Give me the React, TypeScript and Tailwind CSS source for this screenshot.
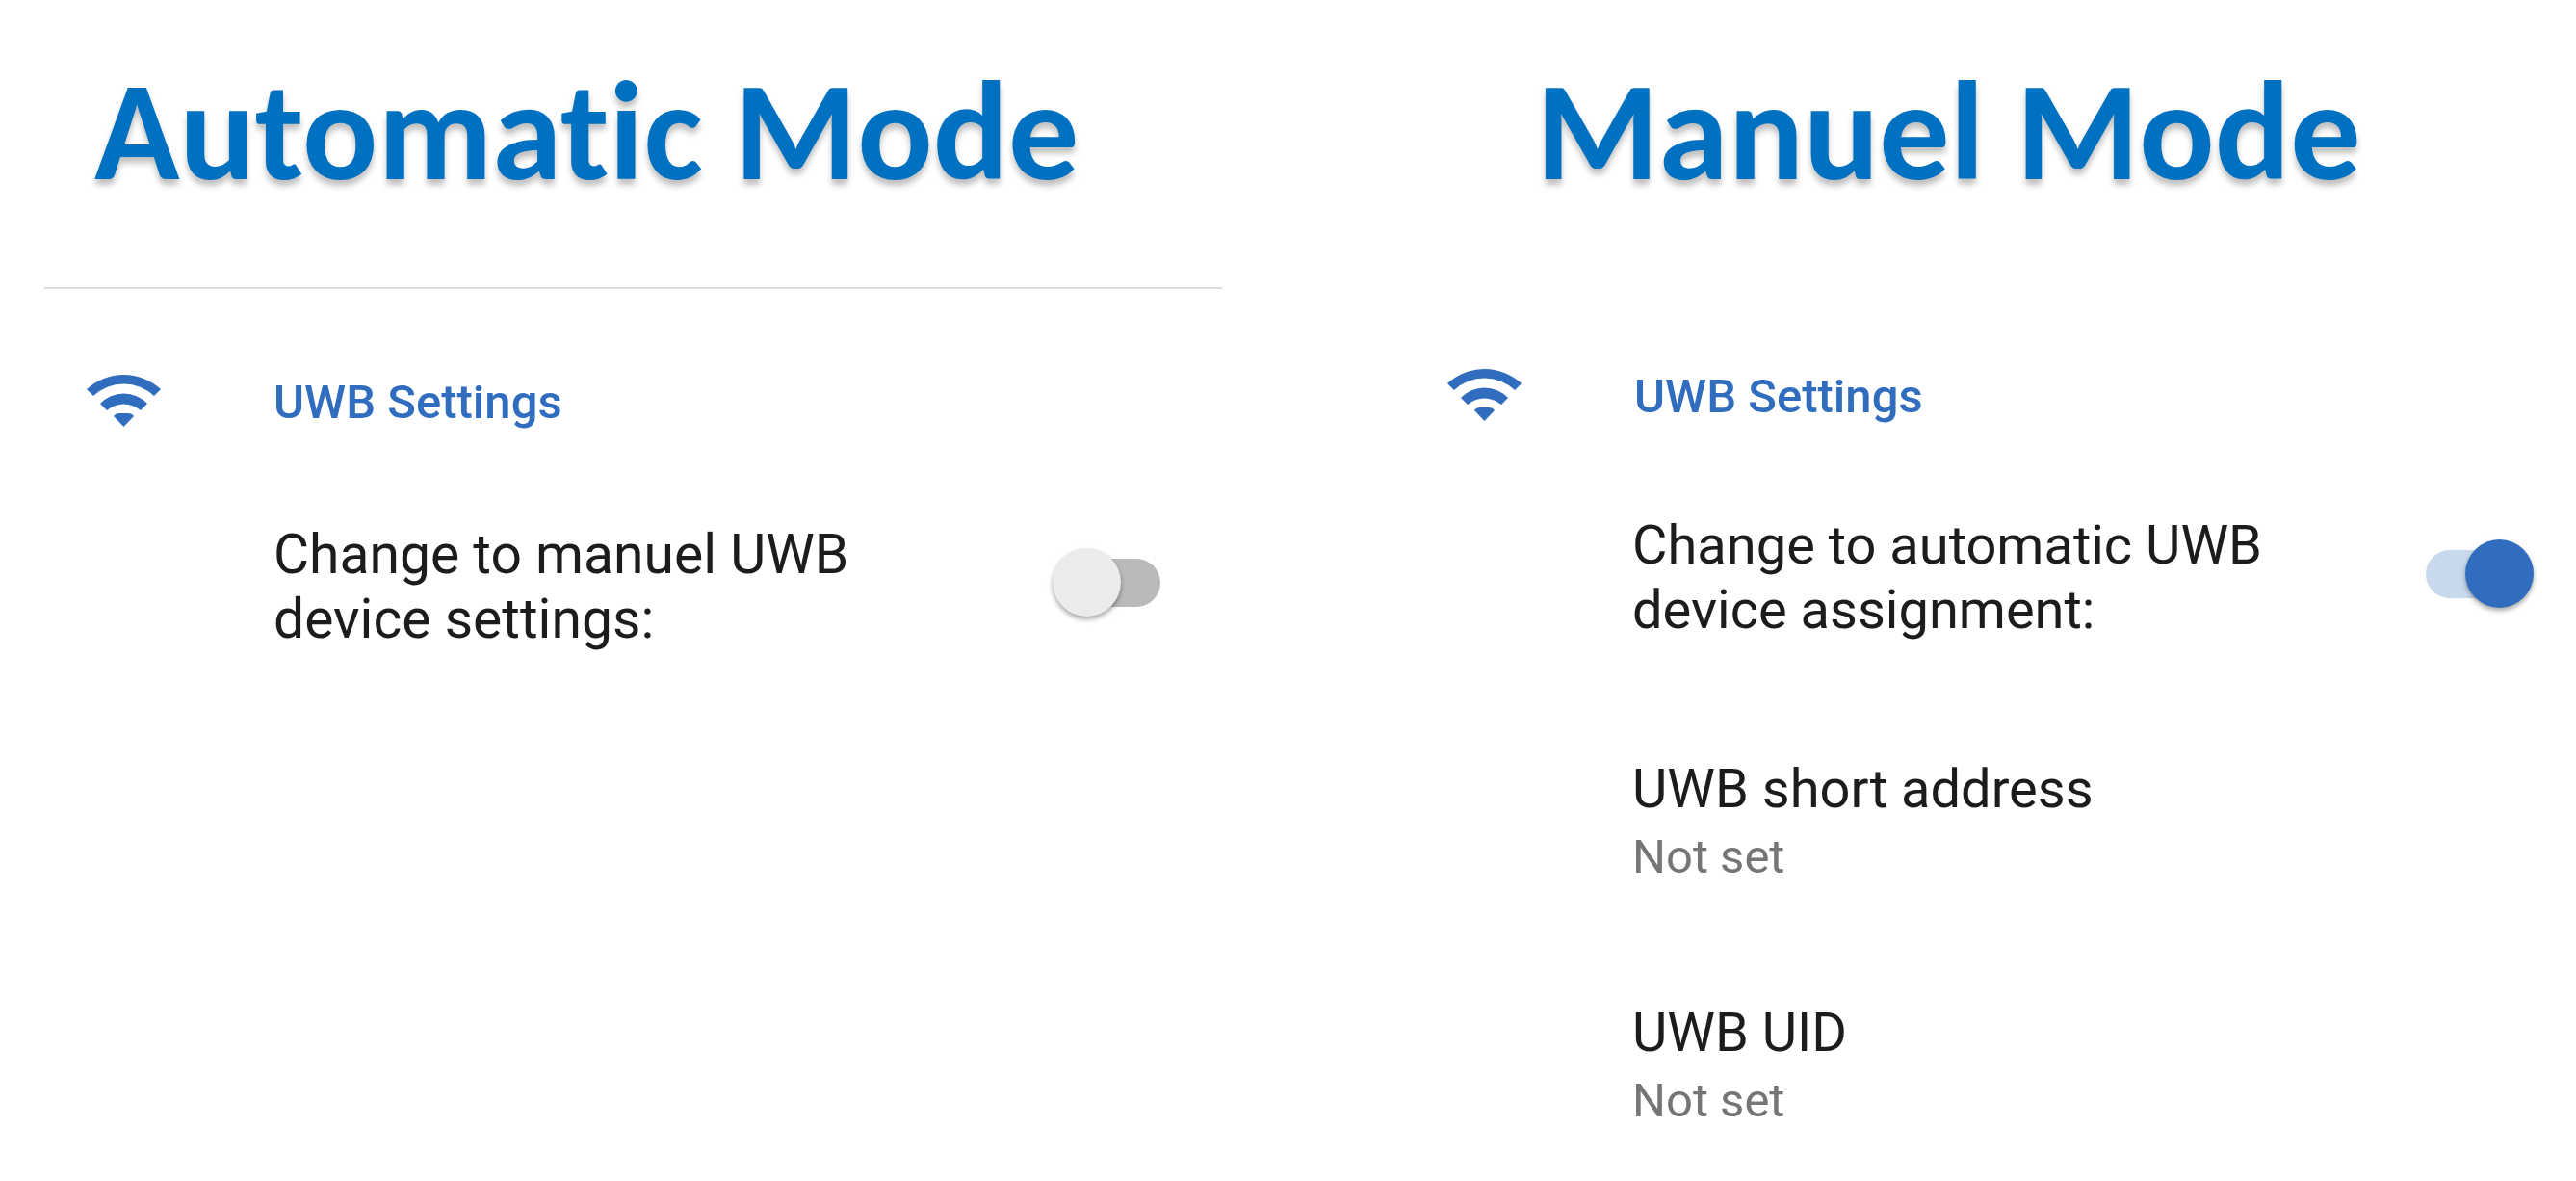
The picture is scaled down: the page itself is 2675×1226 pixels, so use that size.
import React from "react";

function Wifi() {
  return (
    <svg viewBox="0 0 77 56" className="mb-1 h-14 w-[77px] shrink-0" fill="#306dbe" aria-hidden="true">
      <path d="M0 16A57 57 0 0 1 77 16L70 23A46 46 0 0 0 7 23Z" />
      <path d="M14 31A34 34 0 0 1 63 31L56 38A27 27 0 0 0 21 38Z" />
      <path d="M28 44Q30 41 34 41H43Q47 41 49 44L38.5 55Z" />
    </svg>
  );
}

function Title({ children }: { children: React.ReactNode }) {
  return (
    <h1 className="whitespace-nowrap font-[Carlito,Lato,sans-serif] text-[146px] font-bold leading-[156px] text-[#0070c0] [font-variant-ligatures:none] [text-shadow:0_6px_6px_rgba(0,0,0,0.25)]">
      {children}
    </h1>
  );
}

function SectionHeading() {
  return (
    <div className="flex items-center gap-[117px]">
      <Wifi />
      <h2 className="text-[49px] font-medium leading-[64px] text-[#306dbe]">UWB Settings</h2>
    </div>
  );
}

function Switch({ id, on }: { id: string; on: boolean }) {
  return (
    <span className="relative mt-[27px] flex h-[71px] w-28 shrink-0 items-center">
      <input id={id} type="checkbox" role="switch" defaultChecked={on} className="peer absolute inset-0 z-10 size-full cursor-pointer opacity-0" />
      <span className="h-[50px] w-full rounded-full bg-[#bababa] peer-checked:bg-[#c8d9ee]" />
      <span className="absolute left-0 top-0 size-[71px] rounded-full bg-[#ebebeb] shadow-[0_3px_5px_rgba(0,0,0,0.35)] peer-checked:left-auto peer-checked:right-0 peer-checked:bg-[#306dbe]" />
    </span>
  );
}

export default function App() {
  return (
    <main className="grid grid-cols-[1411fr_1264fr] bg-white font-[Roboto,sans-serif] text-[#1c1c1c]">
      <section className="pl-[46px] pr-[142px]">
        <div className="border-b-2 border-[#dedede] pb-[84px] pl-[52px] pt-[58px]">
          <Title>Automatic Mode</Title>
        </div>
        <div className="pl-11 pt-[86px]">
          <SectionHeading />
        </div>
        <div className="flex items-start justify-between pl-[238px] pr-16 pt-[92px]">
          <label htmlFor="manual-switch" className="text-[57px] leading-[67px]">Change to manuel UWB<br />device settings:</label>
          <Switch id="manual-switch" on={false} />
        </div>
      </section>
      <section className="pl-[92px] pr-11">
        <div className="pb-[86px] pl-[92px] pt-[58px]">
          <Title>Manuel Mode</Title>
        </div>
        <div className="pt-20">
          <SectionHeading />
        </div>
        <div className="flex items-start justify-between pl-[192px] pt-[89px]">
          <label htmlFor="auto-switch" className="text-[56px] leading-[67px]">Change to automatic UWB<br />device assignment:</label>
          <Switch id="auto-switch" on />
        </div>
        <dl className="pl-[192px] pt-[119px]">
          <dt className="text-[56px] leading-[67px]">UWB short address</dt>
          <dd className="pt-[5px] text-[49px] leading-[64px] text-[#757575]">Not set</dd>
          <dt className="pt-[117px] text-[56px] leading-[67px]">UWB UID</dt>
          <dd className="pt-[5px] text-[49px] leading-[64px] text-[#757575]">Not set</dd>
        </dl>
      </section>
    </main>
  );
}
